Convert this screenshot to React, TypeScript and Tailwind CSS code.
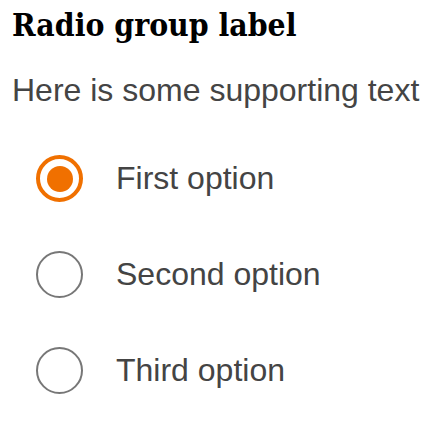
import { useState } from "react"

const options = ["First option", "Second option", "Third option"]

export default function App() {
  const [selected, setSelected] = useState(0)

  return (
    <div className="w-[438px] h-[434px] bg-white px-3 pt-[6px]" style={{ fontFamily: '"Liberation Sans", Arial, sans-serif' }}>
      <h2
        className="text-[31.6px] leading-[37px] font-bold font-stretch-condensed text-black"
        style={{ fontFamily: '"DejaVu Serif", serif' }}
      >
        Radio group label
      </h2>
      <p className="mt-[29px] text-[32px] leading-[36px] text-[#444]">Here is some supporting text</p>

      <div className="mt-[47px] flex flex-col gap-[49px] pl-6">
        {options.map((label, i) => (
          <label key={label} className="flex items-center gap-[33px] cursor-pointer" onClick={() => setSelected(i)}>
            {selected === i ? (
              <span className="w-[47px] h-[47px] rounded-full border-[4px] border-[#f07000] flex items-center justify-center">
                <span className="w-[26px] h-[26px] rounded-full bg-[#f07000]" />
              </span>
            ) : (
              <span className="w-[47px] h-[47px] rounded-full border-2 border-[#777]" />
            )}
            <span className="text-[32px] leading-[47px] text-[#444]">{label}</span>
          </label>
        ))}
      </div>
    </div>
  )
}
